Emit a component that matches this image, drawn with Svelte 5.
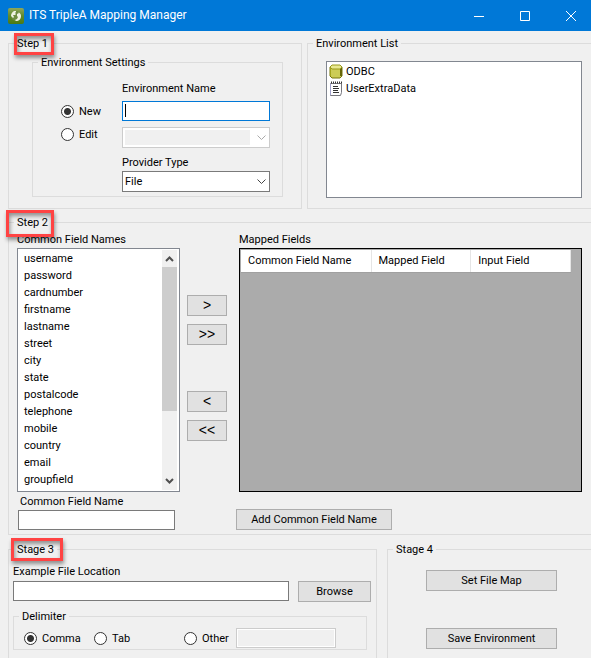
<script>
  const environments = [
    { name: 'ODBC', kind: 'database' },
    { name: 'UserExtraData', kind: 'file' }
  ]
  const commonFields = [
    'username', 'password', 'cardnumber', 'firstname', 'lastname', 'street', 'city',
    'state', 'postalcode', 'telephone', 'mobile', 'country', 'email', 'groupfield'
  ]

  let mode = $state('new')
  let environmentName = $state('')
  let provider = $state('File')
  let newField = $state('')
  let fileLocation = $state('')
  let delimiter = $state('comma')
  let otherDelimiter = $state('')
</script>

<div class="window">
  <header class="titlebar">
    <svg viewBox="0 0 16 16" width="16" height="16" aria-hidden="true">
      <defs>
        <linearGradient id="leaf" x1="0" y1="0" x2="0" y2="1">
          <stop offset="0" stop-color="#8fa65a" />
          <stop offset="0.5" stop-color="#5f8a2c" />
          <stop offset="1" stop-color="#4a7a14" />
        </linearGradient>
      </defs>
      <rect width="16" height="16" rx="2" fill="url(#leaf)" />
      <circle cx="8" cy="8" r="5" fill="#6d8c40" />
      <path d="M3 8c0-2 1-4 3-5h2v1L7 5l1 1-1 1H5l1 2-1 1-1-1zM10 4c2 1 3 2 3 4 0 3-2 5-5 5l-1-1 2-1 1-2-1-1V6l2-1z" fill="#eef2e2" />
    </svg>
    <h1>ITS TripleA Mapping Manager</h1>
    <div class="window-buttons">
      <button type="button" aria-label="Minimize">
        <svg viewBox="0 0 10 10" width="10" height="10"><path d="M0 5.5h10" /></svg>
      </button>
      <button type="button" aria-label="Maximize">
        <svg viewBox="0 0 10 10" width="10" height="10"><path d="M.5.5h9v9h-9z" /></svg>
      </button>
      <button type="button" aria-label="Close">
        <svg viewBox="0 0 10 10" width="10" height="10"><path d="M0 0l10 10M10 0L0 10" /></svg>
      </button>
    </div>
  </header>

  <main>
    <div class="top-row">
      <fieldset>
        <legend class="marked">Step 1</legend>
        <fieldset class="env-settings">
          <legend>Environment Settings</legend>
          <div class="settings">
            <label class="caption" for="env-name">Environment Name</label>
            <label class="radio first"><input type="radio" value="new" bind:group={mode}>New</label>
            <div class="focused">
              <input type="text" id="env-name" bind:value={environmentName}>
              {#if !environmentName}<span class="caret"></span>{/if}
            </div>
            <label class="radio"><input type="radio" value="edit" bind:group={mode}>Edit</label>
            <div class="combo" class:disabled={mode === 'new'}>
              <select aria-label="Environment to edit" disabled={mode === 'new'}>
                <option></option>
              </select>
              <svg viewBox="0 0 9 6" width="9" height="6"><path d="M.5.5l4 4 4-4" /></svg>
            </div>
            <label class="caption provider" for="provider">Provider Type</label>
            <div class="combo last">
              <select id="provider" bind:value={provider}>
                <option>File</option>
              </select>
              <svg viewBox="0 0 9 6" width="9" height="6"><path d="M.5.5l4 4 4-4" /></svg>
            </div>
          </div>
        </fieldset>
      </fieldset>

      <fieldset class="open">
        <legend>Environment List</legend>
        <ul class="environments">
          {#each environments as env}
            <li>
              {#if env.kind === 'database'}
                <svg viewBox="0 0 14 15" width="14" height="15">
                  <path d="M1 3v9l2 2h8l2-2V3z" fill="#cccc55" stroke="#77770c" />
                  <path d="M1.500 3.500v8.500" stroke="#a5a51c" />
                  <path d="M12 4v8" stroke="#66660a" stroke-width="2" />
                  <path d="M1 3l2-2h8l2 2-2 2H3z" fill="#e8e890" stroke="#99991c" />
                </svg>
              {:else}
                <svg viewBox="0 0 14 15" width="14" height="15">
                  <path d="M1.500 2.500h11v9l-1 3h-10z" fill="#fff" stroke="#77777f" />
                  <path d="M1.500 3v11" stroke="#a0a0cc" />
                  <path d="M2 1.500h11" stroke="#333" stroke-dasharray="1 1" stroke-width="2" />
                  <path d="M4 5.500h5M4 7.500h6M4 9.500h5M4 11.500h6" stroke="#333" />
                </svg>
              {/if}
              {env.name}
            </li>
          {/each}
        </ul>
      </fieldset>
    </div>

    <fieldset class="open mapping">
      <legend class="marked wide">Step 2</legend>
      <div class="mapping-columns">
        <div class="common">
          <h2 id="common-title">Common Field Names</h2>
          <div class="listbox">
            <ul aria-labelledby="common-title">
              {#each commonFields as field}
                <li>{field}</li>
              {/each}
            </ul>
            <div class="scrollbar" aria-hidden="true">
              <svg viewBox="0 0 9 6" width="9" height="6"><path d="M1 5l3.500-3.500L8 5" /></svg>
              <div class="thumb"></div>
              <svg viewBox="0 0 9 6" width="9" height="6"><path d="M1 1l3.500 3.500L8 1" /></svg>
            </div>
          </div>
        </div>

        <div class="movers">
          <button type="button">&gt;</button>
          <button type="button">&gt;&gt;</button>
          <button type="button" class="back">&lt;</button>
          <button type="button">&lt;&lt;</button>
        </div>

        <div class="mapped">
          <h2>Mapped Fields</h2>
          <div class="grid">
            <table>
              <thead>
                <tr>
                  <th class="name">Common Field Name</th>
                  <th>Mapped Field</th>
                  <th>Input Field</th>
                </tr>
              </thead>
            </table>
          </div>
        </div>
      </div>

      <div class="add-field">
        <div>
          <label for="field-name">Common Field Name</label>
          <input type="text" id="field-name" bind:value={newField}>
        </div>
        <button type="button">Add Common Field Name</button>
      </div>
    </fieldset>

    <div class="bottom-row">
      <fieldset>
        <legend class="marked stage">Stage 3</legend>
        <div class="example-file">
          <label for="file-location">Example File Location</label>
          <div class="file">
            <input type="text" id="file-location" bind:value={fileLocation}>
            <button type="button">Browse</button>
          </div>
          <fieldset class="delimiter">
            <legend>Delimiter</legend>
            <div class="delimiters">
              <label class="radio"><input type="radio" value="comma" bind:group={delimiter}>Comma</label>
              <label class="radio"><input type="radio" value="tab" bind:group={delimiter}>Tab</label>
              <label class="radio"><input type="radio" value="other" bind:group={delimiter}>Other</label>
              <input type="text" aria-label="Other delimiter" bind:value={otherDelimiter} disabled={delimiter !== 'other'}>
            </div>
          </fieldset>
        </div>
      </fieldset>

      <fieldset class="open">
        <legend>Stage 4</legend>
        <div class="actions">
          <button type="button">Set File Map</button>
          <button type="button">Save Environment</button>
        </div>
      </fieldset>
    </div>
  </main>
</div>

<style>
  :global(body) {
    margin: 0;
    background: #f0f0f0;
  }

  .window {
    display: flex;
    flex-direction: column;
    min-height: 100vh;
    overflow: hidden;
    background: #f0f0f0;
    color: #000;
    font: 11px/17px Roboto, "Liberation Sans", sans-serif;
  }

  .window * {
    box-sizing: border-box;
  }

  .titlebar {
    display: flex;
    align-items: center;
    height: 31px;
    padding-left: 8px;
    background: #0078d7;
    color: #fff;
  }

  h1 {
    flex: 1;
    margin: 0 0 0 5px;
    font: 12px/17px Roboto, "Open Sans", sans-serif;
  }

  .window-buttons {
    display: flex;
    margin-right: -3px;
  }

  .window-buttons button {
    display: flex;
    align-items: center;
    justify-content: center;
    width: 46px;
    height: 31px;
    padding: 0;
    border: 0;
    background: none;
  }

  .window-buttons path {
    fill: none;
    stroke: #fff;
  }

  main {
    display: flex;
    flex: 1;
    flex-direction: column;
    padding: 4px 0 0 8px;
  }

  fieldset {
    min-width: 0;
    margin: 0;
    padding: 0;
    border: 1px solid #dcdcdc;
  }

  fieldset.open {
    border-right: 0;
  }

  legend {
    position: relative;
    margin-left: 5px;
    padding: 0 3px;
  }

  /* red highlight drawn round a legend */
  .marked::after {
    content: "";
    position: absolute;
    inset: -2px -3px -3px 0;
    border: 3px solid #ff4343;
    box-shadow: 1px 3px 4px rgba(0, 0, 0, .4), inset 1px 3px 4px rgba(0, 0, 0, .4);
  }

  .marked.wide::after {
    inset: -4px -3px -6px -8px;
  }

  .marked.stage::after {
    inset: -3px -6px -3px -3px;
  }

  h2 {
    margin: 0;
    font: inherit;
  }

  ul {
    margin: 0;
    padding: 0;
    list-style: none;
  }

  label {
    display: block;
  }

  input[type=text],
  select {
    display: block;
    width: 100%;
    height: 20px;
    margin: 0;
    padding: 0 3px;
    border: 1px solid #7a7a7a;
    border-radius: 0;
    outline: none;
    background: #fff;
    color: #000;
    font: inherit;
  }

  input[type=text]:disabled {
    border-color: #ccc;
    background: #f0f0f0;
    box-shadow: inset 0 0 0 1px #fff;
  }

  main button {
    height: 21px;
    padding: 0;
    border: 1px solid #adadad;
    background: #e1e1e1;
    color: #000;
    font: inherit;
  }

  .radio {
    display: flex;
    align-items: center;
    gap: 5px;
  }

  input[type=radio] {
    flex: none;
    width: 13px;
    height: 13px;
    margin: 0;
    border: 1px solid #333;
    border-radius: 50%;
    background: #fff;
    appearance: none;
  }

  input[type=radio]:checked {
    background: radial-gradient(circle, #333 3px, #fff 4px);
  }

  .top-row {
    display: grid;
    grid-template-columns: 294fr 284fr;
    column-gap: 5px;
  }

  .env-settings {
    margin: 2px 18px 11px 23px;
  }

  .settings {
    display: grid;
    grid-template-columns: 61px 1fr;
    padding: 9px 12px 4px 28px;
  }

  .caption {
    grid-column: 2;
    margin-bottom: 4px;
  }

  .caption.provider {
    margin: 6px 0 0;
  }

  .focused {
    position: relative;
  }

  .focused input[type=text] {
    border-color: #0078d7;
  }

  .caret {
    position: absolute;
    top: 3px;
    left: 3px;
    width: 1px;
    height: 13px;
    background: #000;
  }

  .radio.first {
    grid-column: 1;
  }

  .combo {
    position: relative;
    margin-top: 6px;
  }

  .combo.last {
    grid-column: 2;
    margin-top: 0;
  }

  .combo select {
    height: 21px;
    padding: 0 2px;
    appearance: none;
    opacity: 1;
  }

  .combo svg {
    position: absolute;
    top: 8px;
    right: 4px;
    pointer-events: none;
  }

  .combo path {
    fill: none;
    stroke: #444;
  }

  .combo.disabled select {
    border-color: #ccc;
    background: #f0f0f0;
    box-shadow: inset 0 0 0 2px #fff, inset -19px 0 0 #fff;
  }

  .combo.disabled path {
    stroke: #aaa;
  }

  .environments {
    height: 137px;
    margin: 9px 9px 0 18px;
    padding: 1px 2px;
    border: 1px solid #828790;
    background: #fff;
  }

  .environments li {
    display: flex;
    align-items: center;
    gap: 3px;
    height: 17px;
  }

  .mapping {
    margin: 5px 0 6px;
  }

  .mapping-columns {
    display: flex;
    padding: 0 9px 0 8px;
  }

  .common {
    width: 163px;
  }

  .listbox {
    display: flex;
    height: 244px;
    padding: 1px;
    border: 1px solid #828790;
    background: #fff;
  }

  .listbox ul {
    flex: 1;
    padding-left: 5px;
  }

  .scrollbar {
    display: flex;
    flex-direction: column;
    align-items: center;
    justify-content: space-between;
    width: 15px;
    margin-right: 1px;
    padding: 6px 0;
    background: #f0f0f0;
  }

  .scrollbar path {
    fill: none;
    stroke: #505050;
    stroke-width: 2;
  }

  .thumb {
    width: 15px;
    height: 144px;
    margin: 5px 0 auto;
    background: #cdcdcd;
  }

  .movers {
    display: flex;
    flex-direction: column;
    gap: 8px;
    width: 59px;
    padding: 64px 12px 0 7px;
  }

  .movers button {
    font: 14px/17px "Liberation Sans", sans-serif;
  }

  .movers .back {
    margin-top: 38px;
  }

  .mapped {
    flex: 1;
  }

  .grid {
    height: 244px;
    padding: 1px;
    border: 1px solid #000;
    background: #ababab;
  }

  table {
    width: 330px;
    border-collapse: collapse;
    table-layout: fixed;
  }

  th {
    height: 22px;
    padding: 0 7px;
    border-right: 1px solid #e5e5e5;
    border-bottom: 1px solid #a0a0a0;
    background: #fff;
    font-weight: normal;
    text-align: left;
  }

  th.name {
    width: 130px;
  }

  .add-field {
    display: flex;
    gap: 61px;
    align-items: flex-end;
    padding: 1px 0 4px 9px;
  }

  .add-field div {
    width: 157px;
  }

  .add-field label {
    padding-left: 2px;
  }

  .add-field button {
    width: 156px;
  }

  .bottom-row {
    display: grid;
    flex: 1;
    grid-template-columns: 369fr 204fr;
    column-gap: 10px;
  }

  .bottom-row > fieldset {
    border-bottom: 0;
  }

  .example-file {
    padding: 5px 5px 0 4px;
  }

  .file {
    display: flex;
    gap: 9px;
    margin: 1px 0 6px;
  }

  .file input[type=text] {
    flex: 1;
  }

  .file button {
    width: 73px;
  }

  .delimiter {
    margin-right: 4px;
  }

  .delimiters {
    display: grid;
    grid-template-columns: 70px 90px 52px 100px;
    padding: 3px 0 1px 10px;
  }

  .actions {
    display: flex;
    flex-direction: column;
    gap: 37px;
    padding: 12px 34px 0 38px;
  }
</style>
